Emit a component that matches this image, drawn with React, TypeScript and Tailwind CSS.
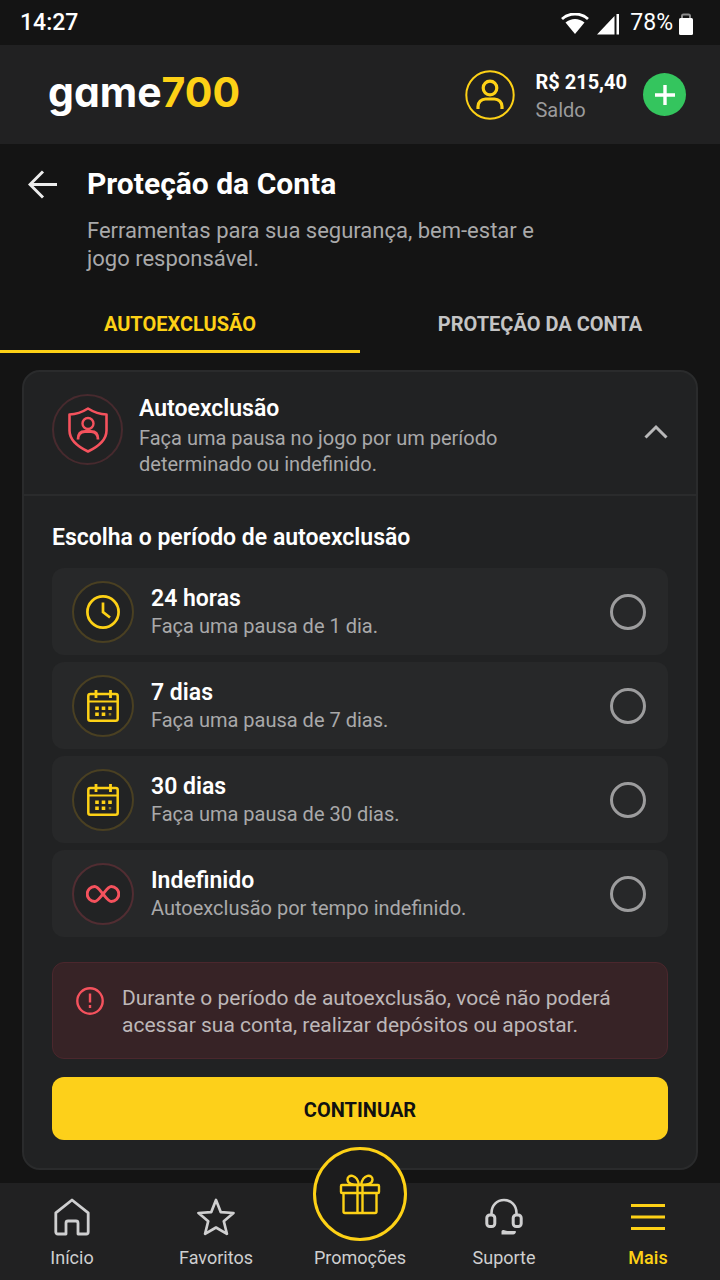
import { useState } from 'react';
import type { ReactNode } from 'react';

type Option = {
  id: string;
  title: string;
  text: string;
  icon: ReactNode;
  danger?: boolean;
};

function WifiIcon() {
  return (
    <svg width="28" height="22" viewBox="0 0 28 22" fill="none" aria-hidden="true">
      <path d="M1 6C8-.7 20-.7 27 6" stroke="#fff" strokeWidth="2.8" />
      <path d="M4.500 9.500c5.500-4.800 13.500-4.800 19 0L14 21z" fill="#fff" />
    </svg>
  );
}

function SignalIcon() {
  return (
    <svg width="23" height="22" viewBox="0 0 23 22" fill="#fff" aria-hidden="true">
      <path d="M0 21.500 17.500 3v18.500zM19.500 1H22v20.500h-2.500z" />
    </svg>
  );
}

function BatteryIcon() {
  return (
    <svg width="14" height="22" viewBox="0 0 14 22" aria-hidden="true">
      <path d="M3 5V3c0-1 .6-1.500 1.500-1.500h5c.9 0 1.500.5 1.500 1.500v2" fill="none" stroke="#8b8b8b" strokeWidth="2" />
      <rect y="5" width="14" height="17" rx="1.500" fill="#fff" />
    </svg>
  );
}

function UserIcon() {
  return (
    <svg width="50" height="50" viewBox="0 0 50 50" fill="none" stroke="#fdd116" aria-hidden="true">
      <circle cx="25" cy="25" r="23.700" strokeWidth="2" />
      <circle cx="25" cy="18" r="6.800" strokeWidth="3.200" />
      <path d="M13 39v-2.500a7.500 7.500 0 0 1 7.500-7.500h9a7.500 7.500 0 0 1 7.500 7.500V39" strokeWidth="3.200" />
    </svg>
  );
}

function ShieldIcon() {
  return (
    <svg width="40" height="46" viewBox="0 0 40 46" fill="none" stroke="#f5525d" strokeLinejoin="round" aria-hidden="true">
      <path d="M20 1.500C14.500 5 8.500 7.300 1.500 7.500v16c0 10 8 16 18.500 21C30.500 39.500 38.500 33.500 38.500 23.500v-16C31.500 7.300 25.500 5 20 1.500z" strokeWidth="2.600" />
      <circle cx="20" cy="16.500" r="5.500" strokeWidth="2.400" />
      <path d="M10 32.500c0-5.500 3-8 7-8h6c4 0 7 2.500 7 8" strokeWidth="2.800" />
    </svg>
  );
}

function ClockIcon() {
  return (
    <svg width="34" height="34" viewBox="0 0 34 34" fill="none" stroke="#fdd116" strokeWidth="2.700" aria-hidden="true">
      <circle cx="17" cy="17" r="15.600" />
      <path d="M17 7.500V17l7 5.500" />
    </svg>
  );
}

function CalendarIcon() {
  return (
    <svg width="32" height="33" viewBox="0 0 32 33" fill="none" stroke="#fdd116" strokeWidth="2.500" aria-hidden="true">
      <rect x="1.300" y="5" width="29.400" height="26.700" rx="2" />
      <path d="M1 12.500h30" strokeWidth="2" />
      <path d="M9 1v8M23.500 1v8" strokeWidth="2.800" />
      <path d="M10 17.500V21M16.500 17.500V21M23 17.500V21M10 23.500V27M16.500 23.500V27" strokeWidth="3.600" />
      <path d="M23 24v2.500" strokeWidth="2.500" opacity=".5" />
    </svg>
  );
}

function InfinityIcon() {
  return (
    <svg width="34" height="18" viewBox="0 0 34 18" fill="none" stroke="#f5525d" strokeWidth="2.900" aria-hidden="true">
      <path d="M17 9C13 4 11.500 1.500 8.700 1.500a7.500 7.500 0 0 0 0 15C11.500 16.500 13 14 17 9s5.500-7.500 8.300-7.500a7.500 7.500 0 0 1 0 15C22.500 16.500 21 14 17 9z" />
    </svg>
  );
}

function HomeIcon() {
  return (
    <svg width="36" height="38" viewBox="0 0 36 38" fill="none" stroke="currentColor" strokeWidth="2.800" strokeLinejoin="round" aria-hidden="true">
      <path d="M1.800 14.800 18 2l16.200 12.800V34a2 2 0 0 1-2 2H24V25a2 2 0 0 0-2-2h-8a2 2 0 0 0-2 2v11H3.800a2 2 0 0 1-2-2z" />
    </svg>
  );
}

function StarIcon() {
  return (
    <svg width="38" height="38" viewBox="0 0 38 38" fill="none" stroke="currentColor" strokeWidth="2.700" strokeLinejoin="round" aria-hidden="true">
      <path d="m19 2 4.800 12.200 12.700.8-9.700 8.300 3.100 12.500L19 29.500 8.100 35.800l3.100-12.500L1.500 15l12.700-.8z" />
    </svg>
  );
}

function GiftIcon() {
  return (
    <svg width="42" height="42" viewBox="0 0 42 42" fill="none" stroke="#fdd116" strokeWidth="2.400" strokeLinejoin="round" aria-hidden="true">
      <rect x="2" y="12" width="38" height="8" rx="1" />
      <path d="M4.500 20v18.500A1.500 1.500 0 0 0 6 40h30a1.500 1.500 0 0 0 1.500-1.500V20M18.500 12v28M23.500 12v28" />
      <path d="M20 12C12 12 8.500 9.500 8.500 6.500 8.500 1 18 .5 20 12zM22 12C30 12 33.500 9.500 33.500 6.500 33.500 1 24 .5 22 12z" />
    </svg>
  );
}

function HeadsetIcon() {
  return (
    <svg width="38" height="38" viewBox="0 0 38 38" fill="none" stroke="currentColor" strokeWidth="2.600" aria-hidden="true">
      <path d="M6.500 17v-2C6.500 7.500 12 2 19 2s12.500 5.500 12.500 13v2" />
      <rect x="1.800" y="17" width="8" height="11.500" rx="3" strokeWidth="3" />
      <rect x="28.200" y="17" width="8" height="11.500" rx="3" strokeWidth="3" />
      <path d="M16.500 36.500v-3c0-1 1-1.500 2-1.500 1.500 0 2 1 4 1h7.500c1 0 1.200.6.800 1.500l-.8 1.200c-.4.600-1 .8-1.800.8z" fill="currentColor" stroke="none" />
    </svg>
  );
}

function MenuIcon() {
  return (
    <svg width="34" height="38" viewBox="0 0 34 38" stroke="currentColor" strokeWidth="3.200" aria-hidden="true">
      <path d="M0 7.500h34M0 19h34M0 30.500h34" />
    </svg>
  );
}

const options: Option[] = [
  { id: '24h', title: '24 horas', text: 'Faça uma pausa de 1 dia.', icon: <ClockIcon /> },
  { id: '7d', title: '7 dias', text: 'Faça uma pausa de 7 dias.', icon: <CalendarIcon /> },
  { id: '30d', title: '30 dias', text: 'Faça uma pausa de 30 dias.', icon: <CalendarIcon /> },
  { id: 'indef', title: 'Indefinido', text: 'Autoexclusão por tempo indefinido.', icon: <InfinityIcon />, danger: true },
];

function StatusBar() {
  return (
    <div className="flex h-[45px] items-center justify-between pt-0.5 pl-5 pr-[27px] text-[23px] font-medium text-white">
      <span>14:27</span>
      <div className="flex items-center gap-2">
        <WifiIcon />
        <SignalIcon />
        <div className="flex items-center gap-1.5 pl-0.5 font-normal">
          <span>78%</span>
          <BatteryIcon />
        </div>
      </div>
    </div>
  );
}

function Header() {
  return (
    <header className="flex h-[99px] items-center justify-between bg-[#212122] pl-12 pr-[34px]">
      <a href="#" className="pb-1.5 font-['Inter',sans-serif] text-[41px] leading-[52px] font-bold text-white [font-feature-settings:'cv11']">
        game<span className="text-[#fdd116]">700</span>
      </a>
      <div className="flex items-center">
        <button type="button" aria-label="Perfil">
          <UserIcon />
        </button>
        <div className="ml-5 flex flex-col pt-0.5">
          <span className="text-xl leading-7 font-bold text-white">R$ 215,40</span>
          <span className="text-xl leading-7 text-[#9b9b9c]">Saldo</span>
        </div>
        <button type="button" aria-label="Depositar" className="ml-4 flex size-[43px] items-center justify-center rounded-full bg-[#34c55e]">
          <svg width="20" height="20" viewBox="0 0 20 20" stroke="#fff" strokeWidth="3.400" aria-hidden="true">
            <path d="M10 0v20M0 10h20" />
          </svg>
        </button>
      </div>
    </header>
  );
}

function PageTitle() {
  return (
    <div className="flex gap-7 pt-5 pl-7">
      <button type="button" aria-label="Voltar" className="flex h-10 items-center">
        <svg width="31" height="30" viewBox="0 0 31 30" fill="none" stroke="#ececec" strokeWidth="3" aria-hidden="true">
          <path d="M29 15.500H2M15 2.500 2 15.500l13 13" />
        </svg>
      </button>
      <div>
        <h1 className="text-[30px] leading-10 font-bold text-white">Proteção da Conta</h1>
        <p className="mt-[13px] max-w-[460px] text-[22px] leading-7 text-[#a9a9aa]">
          Ferramentas para sua segurança, bem-estar e jogo responsável.
        </p>
      </div>
    </div>
  );
}

function Tabs() {
  const [active, setActive] = useState(0);
  return (
    <div role="tablist" className="mt-[23px] grid grid-cols-2 text-xl leading-7">
      {['AUTOEXCLUSÃO', 'PROTEÇÃO DA CONTA'].map((label, i) => (
        <button
          key={label}
          type="button"
          role="tab"
          aria-selected={active === i}
          onClick={() => setActive(i)}
          className={`h-[57px] border-b-3 pt-0.5 font-bold ${active === i ? 'border-[#fdd116] text-[#fdd116]' : 'border-transparent text-[#c4c4c5]'}`}
        >
          {label}
        </button>
      ))}
    </div>
  );
}

function OptionRow({ option, checked, onSelect }: { option: Option; checked: boolean; onSelect: () => void }) {
  return (
    <label htmlFor={option.id} className="flex h-[87px] items-center rounded-xl bg-[#272829] pl-5 pr-[22px]">
      <span
        className={`flex size-[62px] shrink-0 items-center justify-center rounded-full border-2 bg-[#222324] ${option.danger ? 'border-[#512d32]' : 'border-[#4a4022]'}`}
      >
        {option.icon}
      </span>
      <span className="ml-[17px] flex flex-1 flex-col pt-px">
        <span className="text-[23px] leading-7 font-semibold text-white">{option.title}</span>
        <span className="text-[20px] leading-[26px] text-[#a9a9aa]">{option.text}</span>
      </span>
      <input
        id={option.id}
        type="radio"
        name="periodo"
        checked={checked}
        onChange={onSelect}
        className="size-9 appearance-none rounded-full border-3 border-[#9c9c9d] checked:border-[10px] checked:border-[#fdd116]"
      />
    </label>
  );
}

function ExclusionCard() {
  const [period, setPeriod] = useState('');
  const [open, setOpen] = useState(true);
  return (
    <section className="mx-[22px] mt-[17px] rounded-[18px] border-2 border-[#2a2b2c] bg-[#212223]">
      <button
        type="button"
        aria-expanded={open}
        onClick={() => setOpen(!open)}
        className="flex w-full items-start border-b-2 border-[#2a2b2c] px-7 pt-[22px] pb-[17px] text-left"
      >
        <span className="flex size-[71px] shrink-0 items-center justify-center rounded-full border-2 border-[#472a2e]">
          <ShieldIcon />
        </span>
        <span className="ml-4 flex flex-1 flex-col gap-px">
          <span className="text-[23px] leading-[30px] font-semibold text-white">Autoexclusão</span>
          <span className="max-w-[380px] text-[20px] leading-[26px] text-[#a9a9aa]">
            Faça uma pausa no jogo por um período determinado ou indefinido.
          </span>
        </span>
        <svg className="mt-[30px]" width="24" height="16" viewBox="0 0 24 16" fill="none" stroke="#b8b8b9" strokeWidth="3" aria-hidden="true">
          <path d="M1.500 13.500 12 3l10.500 10.500" />
        </svg>
      </button>
      {open && (
        <div className="px-7 pt-[26px] pb-7">
          <h2 className="text-[23px] leading-8 font-semibold text-white">Escolha o período de autoexclusão</h2>
          <div className="mt-3.5 flex flex-col gap-[7px]">
            {options.map((o) => (
              <OptionRow key={o.id} option={o} checked={period === o.id} onSelect={() => setPeriod(o.id)} />
            ))}
          </div>
          <div className="mt-[25px] flex gap-[18px] rounded-xl border border-[#4b272d] bg-[#372326] px-[23px] pt-[22px] pb-[19px]">
            <svg className="mt-0.5 shrink-0" width="28" height="28" viewBox="0 0 28 28" fill="none" stroke="#f5525d" strokeWidth="2.400" aria-hidden="true">
              <circle cx="14" cy="14" r="12.700" />
              <path d="M14 6.500v9M14 18v3" />
            </svg>
            <p className="text-[21px] leading-[27px] text-[#bdb7b8]">
              Durante o período de autoexclusão, você não poderá acessar sua conta, realizar depósitos ou apostar.
            </p>
          </div>
          <button type="button" className="mt-[18px] h-[63px] w-full rounded-xl bg-[#fdd01a] pt-0.5 text-xl font-bold text-[#111]">
            CONTINUAR
          </button>
        </div>
      )}
    </section>
  );
}

function NavItem({ label, icon, active }: { label: string; icon: ReactNode; active?: boolean }) {
  return (
    <a href="#" className={`flex flex-col items-center pt-[15px] ${active ? 'font-medium text-[#fdd116]' : 'text-[#cfcfd0]'}`}>
      {icon}
      <span className="mt-2.5 text-lg leading-6">{label}</span>
    </a>
  );
}

function BottomNav() {
  return (
    <nav className="mt-[13px] grid h-[97px] grid-cols-5 bg-[#212122]">
      <NavItem label="Início" icon={<HomeIcon />} />
      <NavItem label="Favoritos" icon={<StarIcon />} />
      <a href="#" className="relative flex flex-col items-center justify-end pb-2.5 text-[#cfcfd0]">
        <span className="absolute bottom-[39px] flex size-[94px] items-center justify-center rounded-full border-3 border-[#fdd116] bg-[#1c1c1d]">
          <GiftIcon />
        </span>
        <span className="text-lg leading-6">Promoções</span>
      </a>
      <NavItem label="Suporte" icon={<HeadsetIcon />} />
      <NavItem label="Mais" icon={<MenuIcon />} active />
    </nav>
  );
}

export default function App() {
  return (
    <div className="min-h-screen bg-[#141414] font-['Roboto',sans-serif]">
      <StatusBar />
      <Header />
      <main>
        <PageTitle />
        <Tabs />
        <ExclusionCard />
      </main>
      <BottomNav />
    </div>
  );
}
